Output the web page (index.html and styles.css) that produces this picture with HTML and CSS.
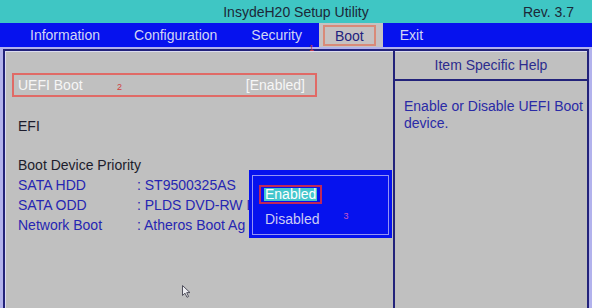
FILE: index.html
```html
<!DOCTYPE html>
<html lang="en">
<head>
    <meta charset="UTF-8">
    <title>InsydeH20 Setup Utility</title>
    <link rel="stylesheet" href="styles.css">
</head>
<body>
    <div class="screen">
        <header class="titlebar">
            <span class="title">InsydeH20 Setup Utility</span>
            <span class="rev">Rev. 3.7</span>
        </header>

        <nav class="menubar">
            <span class="menu-item">Information</span>
            <span class="menu-item">Configuration</span>
            <span class="menu-item">Security</span>
            <span class="menu-item active"><span class="label">Boot</span></span>
            <span class="menu-item">Exit</span>
        </nav>

        <div class="workspace">
            <div class="frame">
                <main class="main">
                    <div class="uefi-row">
                        <span class="uefi-label">UEFI Boot</span>
                        <span class="mark">2</span>
                        <span class="uefi-value">[Enabled]</span>
                    </div>

                    <div class="setting section">EFI</div>

                    <div class="section">
                        <div class="setting">Boot Device Priority</div>
                        <div class="device"><span>SATA HDD</span><span>: ST9500325AS</span></div>
                        <!-- only the part left of the popup is visible -->
                        <div class="device"><span>SATA ODD</span><span>: PLDS DVD-RW D</span></div>
                        <div class="device"><span>Network Boot</span><span>: Atheros Boot Ag</span></div>
                    </div>
                </main>

                <aside class="help">
                    <div class="help-title">Item Specific Help</div>
                    <p class="help-text">Enable or Disable UEFI Boot device.</p>
                </aside>
            </div>
        </div>

        <!-- option popup over the list -->
        <div class="popup">
            <div class="popup-inner">
                <div class="option-box"><span class="option selected">Enabled</span></div>
                <div class="option-row">
                    <span class="option">Disabled</span>
                    <span class="mark popup-mark">3</span>
                </div>
            </div>
        </div>

        <span class="mark tab-mark">1</span>

        <svg class="cursor" width="9" height="13" viewBox="0 0 9 13">
            <path d="M0.5 0.5 V10.5 L3 8.2 L5 12.3 L6.6 11.5 L4.7 7.6 H8 Z" fill="#ececf0" stroke="#50505c" stroke-width="1"/>
        </svg>
    </div>
</body>
</html>
```

FILE: styles.css
```css
* {
    box-sizing: border-box;
}

body {
    margin: 0;
    font-family: "Liberation Sans", Arial, sans-serif;
    font-size: 14px;
    background: #c0c0c0;
}

.screen {
    position: relative;
    width: 592px;
    height: 308px;
    overflow: hidden;
    display: flex;
    flex-direction: column;
}

/* title bar */
.titlebar {
    height: 23px;
    background: #3fc6c4;
    color: #1c2838;
    display: grid;
    grid-template-columns: 1fr auto 1fr;
    align-items: center;
}

.titlebar .title {
    grid-column: 2;
}

.titlebar .rev {
    justify-self: end;
    padding-right: 18px;
}

/* menu */
.menubar {
    height: 24px;
    background: #0612ee;
    display: flex;
    padding-left: 13px;
}

.menu-item {
    display: flex;
    align-items: center;
    padding: 0 17px;
    color: #d2d6f4;
}

.menu-item.active {
    background: #c6c2c2;
    padding: 0 7px 0 4px;
    color: #22227e;
}

.menu-item.active .label {
    border: 2px solid #d98a78;
    padding: 1px 10px 0;
    line-height: 16px;
}

/* body frame */
.workspace {
    flex: 1;
    display: flex;
    background: #b2b2ec;
    padding: 2px 3px 0;
}

.frame {
    flex: 1;
    display: flex;
    background: #c0c0c0;
    border: 2px solid #22227a;
    border-bottom: 0;
    box-shadow: inset 1px 1px 0 #dcdcf0;
}

.main {
    width: 388px;
    padding: 22px 0 0 7px;
}

.uefi-row {
    width: 305px;
    height: 24px;
    display: flex;
    align-items: center;
    border: 2px solid #e06a66;
    padding: 0 10px 0 4px;
    color: #f6f6f6;
}

.uefi-label {
    width: 99px;
}

.uefi-value {
    margin-left: auto;
}

.mark {
    font-size: 9px;
    color: #d04040;
}

.uefi-row .mark {
    margin-top: 4px;
}

.section {
    margin-top: 19px;
}

.setting {
    padding-left: 6px;
    line-height: 20px;
    color: #1c1c2c;
}

.device {
    display: grid;
    grid-template-columns: 119px auto;
    padding-left: 6px;
    line-height: 20px;
    color: #2626b2;
    white-space: nowrap;
}

/* help panel */
.help {
    flex: 1;
    border-left: 2px solid #22227a;
}

.help-title {
    height: 30px;
    line-height: 28px;
    text-align: center;
    color: #2c2c8e;
    border-bottom: 2px solid #22227a;
}

.help-text {
    margin: 0;
    padding: 17px 0 0 9px;
    line-height: 17px;
    color: #2a2aa6;
}

/* option popup */
.popup {
    position: absolute;
    left: 249px;
    top: 170px;
    width: 143px;
    height: 68px;
    background: #0612ee;
    padding: 5px 3px 3px;
}

.popup-inner {
    height: 100%;
    border: 1px solid #9494f4;
    padding: 9px 0 0 6px;
}

.option-box {
    display: inline-block;
    border: 2px solid #c02858;
    padding: 1px 3px;
}

.option {
    color: #ccccf4;
    line-height: 17px;
}

.option.selected {
    display: block;
    line-height: 13px;
    padding: 0 1px;
    background: #44c6cc;
    color: #ffffff;
}

.option-row {
    display: flex;
    margin-top: 7px;
    padding-left: 6px;
}

.popup-mark {
    margin-left: 24px;
    color: #c858c8;
}

.tab-mark {
    position: absolute;
    left: 309px;
    top: 43px;
}

.cursor {
    position: absolute;
    left: 182px;
    top: 285px;
}
```
